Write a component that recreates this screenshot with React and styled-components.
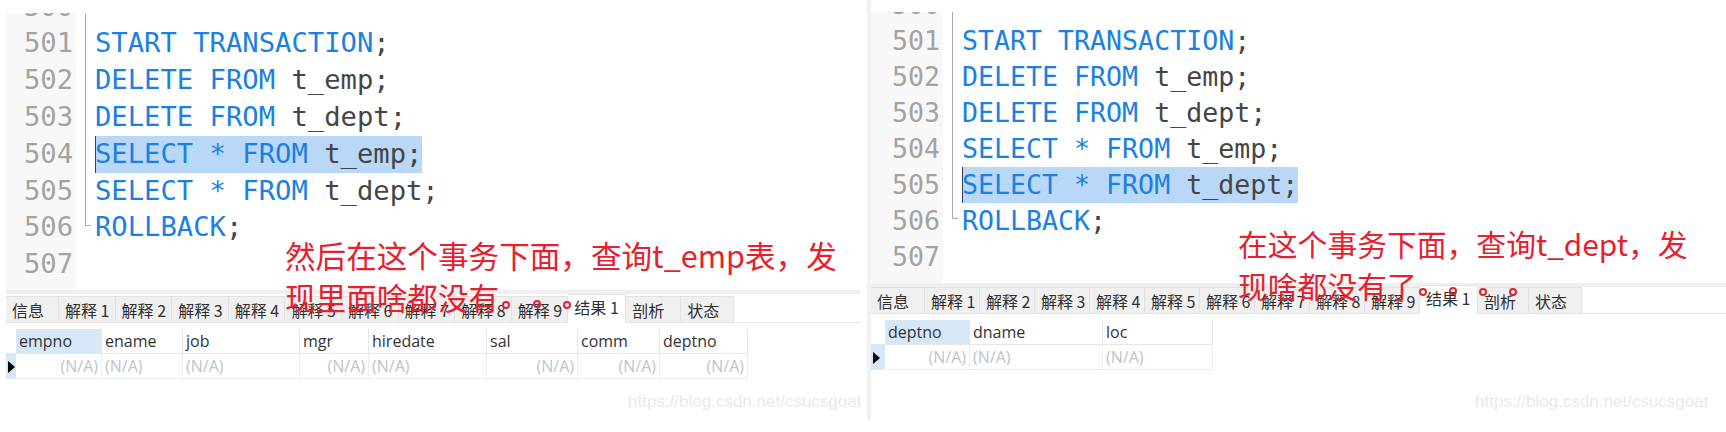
import styled, { createGlobalStyle } from "styled-components"

const GlobalStyle = createGlobalStyle`
    body {
        margin: 0;
        background: #fff;
    }
`

const statements = [
    { no: 500, keyword: "", rest: "" },
    { no: 501, keyword: "START TRANSACTION", rest: ";" },
    { no: 502, keyword: "DELETE FROM", rest: " t_emp;" },
    { no: 503, keyword: "DELETE FROM", rest: " t_dept;" },
    { no: 504, keyword: "SELECT * FROM", rest: " t_emp;" },
    { no: 505, keyword: "SELECT * FROM", rest: " t_dept;" },
    { no: 506, keyword: "ROLLBACK", rest: ";" },
    { no: 507, keyword: "", rest: "" },
]

const explainTabs = ["解释 1", "解释 2", "解释 3", "解释 4", "解释 5", "解释 6", "解释 7", "解释 8", "解释 9"]

const panels = [
    {
        id: "emp",
        width: 854,
        gap: 0,
        top: 13,
        strip: false,
        fontSize: 27.2,
        lineHeight: 36.8,
        pull: 24.4,
        editorHeight: 277,
        gutter: 70,
        selected: 504,
        foldHeight: 213,
        tabs: { info: 53, explain: 56.6, active: 58, rest: [55, 53] },
        tabsTop: 2,
        gridTop: 6,
        columns: [
            { name: "empno", width: 86, right: true },
            { name: "ename", width: 81 },
            { name: "job", width: 117 },
            { name: "mgr", width: 69, right: true },
            { name: "hiredate", width: 118 },
            { name: "sal", width: 91, right: true },
            { name: "comm", width: 82, right: true },
            { name: "deptno", width: 88, right: true },
        ],
        marker: 10,
        noteLeft: 279,
        noteTop: 234,
        noteSize: 30.6,
        note: ["然后在这个事务下面，查询t_emp表，发", "现里面啥都没有"],
        dots: [[500, 305], [531, 304], [561, 305]],
        markLeft: 622,
    },
    {
        id: "dept",
        width: 859,
        gap: 7,
        top: 12,
        strip: true,
        fontSize: 26.6,
        lineHeight: 36.1,
        pull: 25.4,
        editorHeight: 271,
        gutter: 72,
        selected: 505,
        foldHeight: 207,
        tabs: { info: 54, explain: 55, active: 58, rest: [51, 53] },
        tabsTop: 0,
        gridTop: 6,
        columns: [
            { name: "deptno", width: 85, right: true },
            { name: "dname", width: 133 },
            { name: "loc", width: 110 },
        ],
        marker: 14,
        noteLeft: 371,
        noteTop: 222,
        noteSize: 29.8,
        note: ["在这个事务下面，查询t_dept，发", "现啥都没有了"],
        dots: [[556, 292], [586, 291], [616, 292], [646, 292]],
        markLeft: 608,
    },
]

const Panel = ({ data }) => {
    const tabList = [
        { label: "信息", width: data.tabs.info },
        ...explainTabs.map((label) => ({ label, width: data.tabs.explain })),
        { label: "结果 1", width: data.tabs.active, active: true },
        { label: "剖析", width: data.tabs.rest[0] },
        { label: "状态", width: data.tabs.rest[1] },
    ]
    const template = [`${data.marker}px`, ...data.columns.map((c) => `${c.width}px`)].join(" ")

    return (
        <PanelBox $width={data.width} $gap={data.gap} $top={data.top} $strip={data.strip}>
            <Editor $height={data.editorHeight} $size={data.fontSize} $line={data.lineHeight}>
                <Gutter $width={data.gutter}>
                    <LineStack $pull={data.pull}>
                        {statements.map((s) => (
                            <LineNumber key={s.no}>{s.no}</LineNumber>
                        ))}
                    </LineStack>
                </Gutter>
                <FoldGuide $height={data.foldHeight} />
                <LineStack $pull={data.pull}>
                    {statements.map((s) => (
                        <CodeLine key={s.no}>
                            <CodeText $selected={s.no === data.selected}>
                                <Keyword>{s.keyword}</Keyword>
                                {s.rest}
                            </CodeText>
                        </CodeLine>
                    ))}
                </LineStack>
            </Editor>

            <Divider />

            <TabBar $top={data.tabsTop}>
                {tabList.map((tab) => (
                    <Tab key={tab.label} $width={tab.width} $active={tab.active}>
                        {tab.label}
                    </Tab>
                ))}
            </TabBar>

            <ResultGrid $columns={template} $top={data.gridTop}>
                <HeadCorner />
                {data.columns.map((c, i) => (
                    <HeadCell key={c.name} $current={i === 0}>{c.name}</HeadCell>
                ))}
                <RowMarker>
                    <svg width="7" height="12" viewBox="0 0 7 12">
                        <path d="M0 0 L7 6 L0 12 Z" fill="#000" />
                    </svg>
                </RowMarker>
                {data.columns.map((c) => (
                    <ValueCell key={c.name} $right={c.right}>(N/A)</ValueCell>
                ))}
            </ResultGrid>

            <Note $left={data.noteLeft} $top={data.noteTop} $size={data.noteSize}>
                {data.note.map((line) => (
                    <div key={line}>{line}</div>
                ))}
            </Note>

            {data.dots.map(([x, y]) => (
                <Dot key={x} $x={x} $y={y} />
            ))}

            <Watermark $left={data.markLeft}>https://blog.csdn.net/csucsgoat</Watermark>
        </PanelBox>
    )
}

export default function App() {
    return (
        <>
            <GlobalStyle />
            <Page>
                {panels.map((p) => (
                    <Panel key={p.id} data={p} />
                ))}
            </Page>
        </>
    )
}

const Page = styled.div`
    display: flex;
    width: 1726px;
    height: 432px;
    padding-left: 6px;
    box-sizing: border-box;
    overflow: hidden;
`

const PanelBox = styled.div`
    position: relative;
    flex: none;
    box-sizing: border-box;
    width: ${(p) => p.$width}px;
    height: ${(p) => (p.$strip ? 420 : 400)}px;
    margin-left: ${(p) => p.$gap}px;
    padding-top: ${(p) => p.$top}px;
    padding-left: ${(p) => (p.$strip ? 4 : 0)}px;
    background: ${(p) =>
        p.$strip ? "linear-gradient(to right, #f2f2f2 4px, #fff 4px)" : "#fff"};
`

const Editor = styled.div`
    display: flex;
    align-items: flex-start;
    height: ${(p) => p.$height}px;
    overflow: hidden;
    font-family: "DejaVu Sans Mono", monospace;
    font-size: ${(p) => p.$size}px;
    line-height: ${(p) => p.$line}px;
`

const Gutter = styled.div`
    flex: none;
    width: ${(p) => p.$width}px;
    height: 100%;
    margin-right: 9px;
    background: #f8f8f8;
    overflow: hidden;
`

const LineStack = styled.div`
    margin-top: -${(p) => p.$pull}px;
`

const LineNumber = styled.div`
    height: 1lh;
    padding-right: 3px;
    text-align: right;
    color: #a3a3a3;
`

const FoldGuide = styled.div`
    flex: none;
    box-sizing: border-box;
    width: 6px;
    height: ${(p) => p.$height}px;
    margin-right: 4px;
    border-left: 1px solid #a9a9a9;
    border-bottom: 1px solid #a9a9a9;
`

const CodeLine = styled.div`
    height: 1lh;
    white-space: pre;
    color: #454545;
`

const CodeText = styled.span`
    display: inline-block;
    height: 1lh;
    background: ${(p) => (p.$selected ? "#b9d8f8" : "transparent")};
    box-shadow: ${(p) => (p.$selected ? "inset 1px 0 0 #33404d" : "none")};
`

const Keyword = styled.span`
    color: #1b7fe3;
`

const Divider = styled.div`
    height: 4px;
    background: #efefef;
`

const TabBar = styled.div`
    display: flex;
    align-items: flex-end;
    height: 26px;
    margin-top: ${(p) => p.$top}px;
    border-bottom: 1px solid #e4e4e4;
    font-family: "Noto Sans CJK SC", "Open Sans", sans-serif;
    font-size: 16px;
`

const Tab = styled.div`
    flex: none;
    box-sizing: border-box;
    display: flex;
    align-items: center;
    width: ${(p) => p.$width}px;
    height: ${(p) => (p.$active ? 29 : 26)}px;
    margin-bottom: ${(p) => (p.$active ? -1 : 0)}px;
    padding-left: 6px;
    padding-bottom: ${(p) => (p.$active ? 4 : 0)}px;
    background: ${(p) => (p.$active ? "#fff" : "#f0f0f0")};
    border-right: 1px solid #e2e2e2;
    border-top: 1px solid #e2e2e2;
    color: #2f2f2f;
    white-space: nowrap;
`

const ResultGrid = styled.div`
    display: grid;
    grid-template-columns: ${(p) => p.$columns};
    grid-template-rows: 25px 25px;
    margin-top: ${(p) => p.$top}px;
    font-family: "Open Sans", sans-serif;
    font-size: 16px;
`

const HeadCorner = styled.div`
    border-bottom: 1px solid #e6e6e6;
`

const HeadCell = styled.div`
    display: flex;
    align-items: center;
    padding-left: 3px;
    background: ${(p) => (p.$current ? "#d6e8f8" : "#fff")};
    border-right: 1px solid #e6e6e6;
    border-bottom: 1px solid #e6e6e6;
    color: #333;
`

const RowMarker = styled.div`
    display: flex;
    align-items: center;
    padding-left: 2px;
    background: #d6e8f8;
`

const ValueCell = styled.div`
    display: flex;
    align-items: center;
    justify-content: ${(p) => (p.$right ? "flex-end" : "flex-start")};
    padding: 0 3px;
    border-right: 1px solid #efefef;
    border-bottom: 1px solid #ececec;
    color: #bcc3cf;
`

const Note = styled.div`
    position: absolute;
    left: ${(p) => p.$left}px;
    top: ${(p) => p.$top}px;
    font-family: "Noto Sans CJK SC", sans-serif;
    font-size: ${(p) => p.$size}px;
    line-height: 42px;
    white-space: nowrap;
    color: #e6202e;
`

const Dot = styled.div`
    position: absolute;
    left: ${(p) => p.$x - 4}px;
    top: ${(p) => p.$y - 4}px;
    box-sizing: border-box;
    width: 8px;
    height: 8px;
    border: 2px solid #e0202e;
    border-radius: 50%;
`

const Watermark = styled.div`
    position: absolute;
    left: ${(p) => p.$left}px;
    top: 390px;
    font-family: "Liberation Sans", sans-serif;
    font-size: 17px;
    line-height: 24px;
    white-space: nowrap;
    color: #e9e9e9;
`
